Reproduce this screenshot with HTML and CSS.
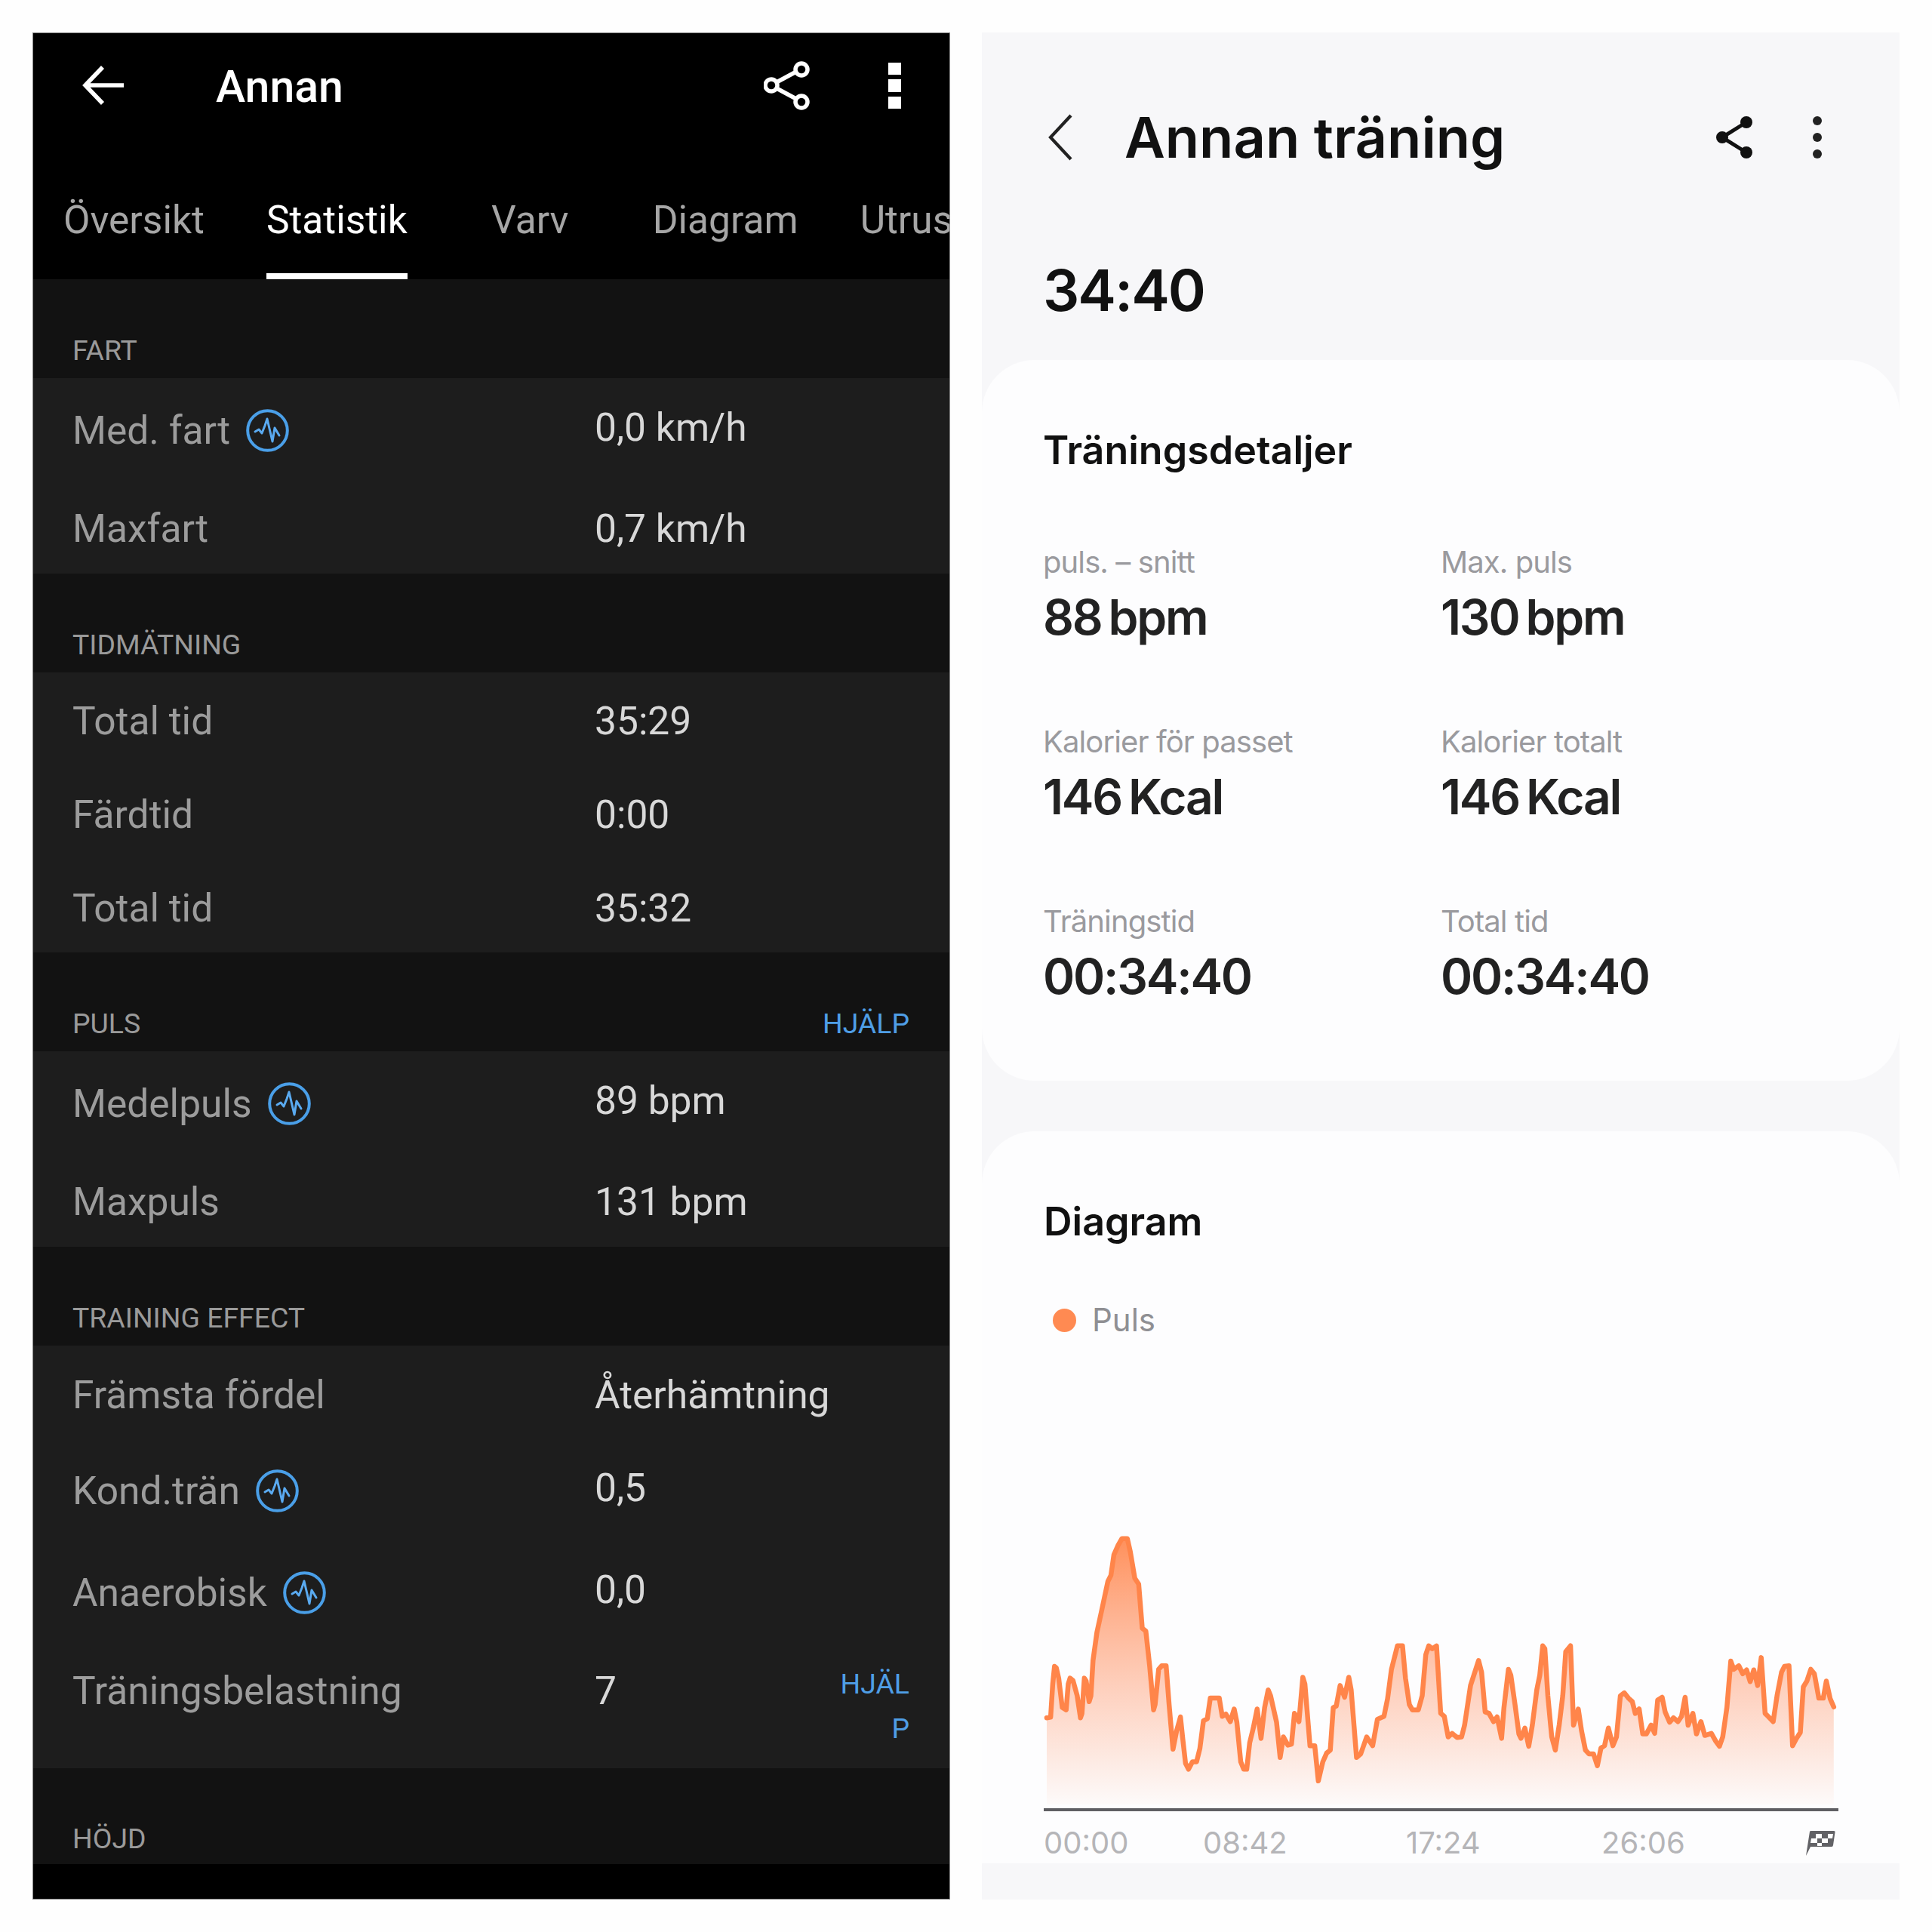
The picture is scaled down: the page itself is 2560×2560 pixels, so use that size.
FILE: index.html
```html
<!DOCTYPE html>
<html lang="sv">
<head>
<meta charset="utf-8">
<title>Annan</title>
<link rel="stylesheet" href="styles.css">
</head>
<body>
<svg class="defs" width="0" height="0" aria-hidden="true">
  <symbol id="pulse" viewBox="0 0 57 57">
    <circle cx="28.5" cy="28.5" r="26.300" fill="none" stroke="#4a9fe8" stroke-width="4"/>
    <path d="M12 30 L17 27 L21 32 L25 22 L28 13 L35 43 L38 25 L41 30 L44 35" fill="none" stroke="#5aaaf0" stroke-width="3" stroke-linejoin="round" stroke-linecap="round"/>
  </symbol>
</svg>
<main class="screens">
  <section class="garmin">
    <header class="g-bar">
      <svg class="g-back" viewBox="0 0 55 52"><path d="M27 2 L4 26 L27 50 M4 26 H55" fill="none" stroke="#fff" stroke-width="5.600"/></svg>
      <h1 class="g-title">Annan</h1>
      <svg class="g-share" viewBox="0 0 62 67"><g fill="none" stroke="#fff" stroke-width="5.500"><circle cx="50" cy="12" r="8"/><circle cx="10" cy="33" r="8"/><circle cx="50" cy="55" r="8"/><path d="M17 29 L43 15 M17 37 L43 51"/></g></svg>
      <svg class="g-dots" viewBox="0 0 17 61"><path d="M0 0h17v16H0zM0 22h17v17H0zM0 45h17v16H0z" fill="#fff"/></svg>
    </header>
    <nav class="g-tabs">
      <span class="tab">Översikt</span>
      <span class="tab active"><span class="tab-in">Statistik</span></span>
      <span class="tab">Varv</span>
      <span class="tab">Diagram</span>
      <span class="tab">Utrustning</span>
    </nav>

    <div class="sec-head"><span>FART</span></div>
    <div class="rows">
      <div class="row h-140 has-icon"><div class="lab">Med. fart<svg class="pulse"><use href="#pulse"/></svg></div><div class="val">0,0 km/h</div></div>
      <div class="row h-119 up"><div class="lab">Maxfart</div><div class="val">0,7 km/h</div></div>
    </div>

    <div class="sec-head"><span>TIDMÄTNING</span></div>
    <div class="rows pad-t">
      <div class="row h-124"><div class="lab">Total tid</div><div class="val">35:29</div></div>
      <div class="row h-124"><div class="lab">Färdtid</div><div class="val">0:00</div></div>
      <div class="row h-124"><div class="lab">Total tid</div><div class="val">35:32</div></div>
    </div>

    <div class="sec-head"><span>PULS</span><span class="help">HJÄLP</span></div>
    <div class="rows">
      <div class="row h-140 has-icon"><div class="lab">Medelpuls<svg class="pulse"><use href="#pulse"/></svg></div><div class="val">89 bpm</div></div>
      <div class="row h-119 up"><div class="lab">Maxpuls</div><div class="val">131 bpm</div></div>
    </div>

    <div class="sec-head"><span>TRAINING EFFECT</span></div>
    <div class="rows">
      <div class="row h-130"><div class="lab">Främsta fördel</div><div class="val">Återhämtning</div></div>
      <div class="row h-125 has-icon"><div class="lab">Kond.trän<svg class="pulse"><use href="#pulse"/></svg></div><div class="val">0,5</div></div>
      <div class="row h-146 has-icon"><div class="lab">Anaerobisk<svg class="pulse"><use href="#pulse"/></svg></div><div class="val">0,0</div></div>
      <div class="row h-159 top"><div class="lab">Träningsbelastning</div><div class="val">7</div><div class="help wrap">HJÄLP</div></div>
    </div>

    <div class="sec-head last"><span>HÖJD</span></div>
    <div class="g-end"></div>
  </section>

  <section class="samsung">
    <header class="s-bar">
      <svg class="s-back" viewBox="0 0 32 62"><path d="M30 2 L3 31 L30 60" fill="none" stroke="#222" stroke-width="4.200"/></svg>
      <h1 class="s-title">Annan träning</h1>
      <svg class="s-share" viewBox="0 0 48 56"><g fill="#111"><circle cx="40" cy="8" r="8"/><circle cx="8" cy="28" r="8"/><circle cx="40" cy="48" r="8"/></g><path d="M8 28 L40 8 M8 28 L40 48" stroke="#111" stroke-width="5" fill="none"/></svg>
      <svg class="s-dots" viewBox="0 0 12 56"><g fill="#222"><circle cx="6" cy="6" r="6"/><circle cx="6" cy="28" r="6"/><circle cx="6" cy="50" r="6"/></g></svg>
    </header>
    <div class="s-time">34:40</div>

    <div class="card details">
      <h2 class="card-title">Träningsdetaljer</h2>
      <div class="stats">
        <div class="stat"><div class="stat-lab">puls. – snitt</div><div class="stat-val">88<span class="unit">bpm</span></div></div>
        <div class="stat"><div class="stat-lab">Max. puls</div><div class="stat-val">130<span class="unit">bpm</span></div></div>
        <div class="stat"><div class="stat-lab">Kalorier för passet</div><div class="stat-val">146<span class="unit">Kcal</span></div></div>
        <div class="stat"><div class="stat-lab">Kalorier totalt</div><div class="stat-val">146<span class="unit">Kcal</span></div></div>
        <div class="stat"><div class="stat-lab">Träningstid</div><div class="stat-val">00:34:40</div></div>
        <div class="stat"><div class="stat-lab">Total tid</div><div class="stat-val">00:34:40</div></div>
      </div>
    </div>

    <div class="card chart-card">
      <h2 class="card-title">Diagram</h2>
      <div class="legend"><span class="legend-dot"></span>Puls</div>
      <svg class="chart" viewBox="120 200 2640 930" preserveAspectRatio="none">
        <defs>
          <linearGradient id="fade" gradientUnits="userSpaceOnUse" x1="0" y1="220" x2="0" y2="1130">
            <stop offset="0" stop-color="#ff8a52" stop-opacity=".95"/>
            <stop offset=".6" stop-color="#ff9a70" stop-opacity=".42"/>
            <stop offset="1" stop-color="#ff9a70" stop-opacity=".03"/>
          </linearGradient>
        </defs>
        <path class="area" d="M120 1130 L120 835 L133 833 L140 720 L146 660 L152 665 L160 700 L172 800 L185 808 L192 720 L198 700 L208 708 L222 760 L233 835 L238 820 L246 700 L252 710 L262 780 L268 760 L275 640 L288 545 L305 465 L325 370 L335 350 L345 280 L358 250 L372 225 L390 225 L400 270 L415 360 L428 380 L440 530 L452 540 L465 660 L478 808 L483 790 L495 670 L505 658 L520 658 L530 790 L543 942 L555 880 L568 832 L575 900 L585 990 L595 1010 L608 985 L622 985 L633 940 L645 845 L658 838 L668 768 L698 768 L708 830 L720 822 L735 848 L748 805 L757 850 L770 985 L780 1010 L790 1010 L800 920 L812 870 L825 805 L838 905 L850 800 L862 740 L870 760 L890 850 L902 970 L913 900 L928 928 L940 925 L950 820 L965 848 L978 697 L985 720 L1002 930 L1018 930 L1030 1050 L1045 985 L1058 955 L1070 945 L1080 800 L1090 795 L1103 725 L1118 765 L1132 697 L1140 740 L1158 970 L1172 958 L1192 900 L1212 930 L1228 840 L1250 830 L1262 770 L1275 670 L1295 590 L1312 590 L1322 700 L1335 790 L1345 808 L1365 808 L1378 760 L1390 620 L1400 590 L1412 600 L1426 590 L1440 820 L1452 830 L1465 900 L1478 888 L1495 902 L1510 900 L1520 860 L1540 725 L1567 640 L1577 680 L1589 815 L1602 820 L1617 848 L1629 832 L1644 905 L1652 800 L1667 670 L1675 690 L1689 790 L1702 890 L1709 905 L1722 870 L1735 932 L1747 860 L1762 740 L1772 690 L1782 590 L1789 600 L1799 760 L1812 900 L1824 945 L1837 860 L1849 760 L1859 610 L1875 590 L1885 860 L1901 805 L1912 880 L1925 945 L1937 958 L1952 958 L1965 998 L1977 938 L1989 930 L2002 870 L2017 930 L2029 900 L2042 760 L2055 750 L2069 768 L2082 780 L2092 820 L2105 805 L2117 890 L2129 890 L2145 860 L2157 888 L2167 775 L2182 765 L2192 815 L2207 850 L2220 835 L2235 848 L2247 830 L2259 765 L2269 860 L2285 820 L2297 890 L2312 848 L2325 895 L2347 888 L2362 915 L2374 932 L2385 900 L2399 800 L2412 642 L2422 670 L2439 658 L2452 685 L2465 672 L2477 712 L2489 672 L2502 725 L2514 630 L2527 820 L2537 830 L2554 848 L2567 760 L2582 680 L2592 660 L2607 658 L2619 930 L2632 905 L2645 885 L2655 730 L2667 710 L2680 670 L2692 685 L2707 768 L2722 768 L2732 710 L2745 770 L2757 798 L2757 1130 Z"/>
        <path class="line" d="M120 835 L133 833 L140 720 L146 660 L152 665 L160 700 L172 800 L185 808 L192 720 L198 700 L208 708 L222 760 L233 835 L238 820 L246 700 L252 710 L262 780 L268 760 L275 640 L288 545 L305 465 L325 370 L335 350 L345 280 L358 250 L372 225 L390 225 L400 270 L415 360 L428 380 L440 530 L452 540 L465 660 L478 808 L483 790 L495 670 L505 658 L520 658 L530 790 L543 942 L555 880 L568 832 L575 900 L585 990 L595 1010 L608 985 L622 985 L633 940 L645 845 L658 838 L668 768 L698 768 L708 830 L720 822 L735 848 L748 805 L757 850 L770 985 L780 1010 L790 1010 L800 920 L812 870 L825 805 L838 905 L850 800 L862 740 L870 760 L890 850 L902 970 L913 900 L928 928 L940 925 L950 820 L965 848 L978 697 L985 720 L1002 930 L1018 930 L1030 1050 L1045 985 L1058 955 L1070 945 L1080 800 L1090 795 L1103 725 L1118 765 L1132 697 L1140 740 L1158 970 L1172 958 L1192 900 L1212 930 L1228 840 L1250 830 L1262 770 L1275 670 L1295 590 L1312 590 L1322 700 L1335 790 L1345 808 L1365 808 L1378 760 L1390 620 L1400 590 L1412 600 L1426 590 L1440 820 L1452 830 L1465 900 L1478 888 L1495 902 L1510 900 L1520 860 L1540 725 L1567 640 L1577 680 L1589 815 L1602 820 L1617 848 L1629 832 L1644 905 L1652 800 L1667 670 L1675 690 L1689 790 L1702 890 L1709 905 L1722 870 L1735 932 L1747 860 L1762 740 L1772 690 L1782 590 L1789 600 L1799 760 L1812 900 L1824 945 L1837 860 L1849 760 L1859 610 L1875 590 L1885 860 L1901 805 L1912 880 L1925 945 L1937 958 L1952 958 L1965 998 L1977 938 L1989 930 L2002 870 L2017 930 L2029 900 L2042 760 L2055 750 L2069 768 L2082 780 L2092 820 L2105 805 L2117 890 L2129 890 L2145 860 L2157 888 L2167 775 L2182 765 L2192 815 L2207 850 L2220 835 L2235 848 L2247 830 L2259 765 L2269 860 L2285 820 L2297 890 L2312 848 L2325 895 L2347 888 L2362 915 L2374 932 L2385 900 L2399 800 L2412 642 L2422 670 L2439 658 L2452 685 L2465 672 L2477 712 L2489 672 L2502 725 L2514 630 L2527 820 L2537 830 L2554 848 L2567 760 L2582 680 L2592 660 L2607 658 L2619 930 L2632 905 L2645 885 L2655 730 L2667 710 L2680 670 L2692 685 L2707 768 L2722 768 L2732 710 L2745 770 L2757 798"/>
      </svg>
      <div class="axis"></div>
      <div class="ticks">
        <span>00:00</span><span>08:42</span><span>17:24</span><span>26:06</span>
        <svg class="flag" viewBox="0 0 40 34"><path d="M6 2 Q6 1 8 1 H38 Q40 1 39.500 3 L37 20 Q36.800 22 35 22 H7 L1 34 Z" fill="#626266"/><path d="M14 5h8v6h-8zM30 5h7l-1 6h-6zM8 11h8v6H7zM22 11h8v6h-8zM16 17h6v4h-6z" fill="#fff"/></svg>
      </div>
    </div>
  </section>
</main>
</body>
</html>
```
FILE: styles.css
```css
* { box-sizing: border-box; }
html, body { margin: 0; padding: 0; }
body { width: 2560px; height: 2560px; background: #fefefe; overflow: hidden; }
.defs { position: absolute; }
h1, h2 { margin: 0; }

.screens { display: flex; gap: 42px; padding: 43px; height: 2560px; }

/* Left phone */
.garmin {
  width: 1216px; height: 2474px; background: #000; overflow: hidden;
  font-family: Roboto, "Liberation Sans", sans-serif; color: #9c9c9c;
  outline: 1px solid #8a8a8a; outline-offset: -1px;
}
.g-bar { display: flex; align-items: center; height: 140px; padding: 0 65px 0 66px; }
.g-back { width: 55px; height: 52px; margin-right: 122px; flex: none; }
.g-title { font-size: 59px; font-weight: 500; line-height: 70px; padding-top: 4px; color: #fff; flex: 1; }
.g-share { width: 62px; height: 67px; margin-right: 103px; flex: none; }
.g-dots { width: 17px; height: 61px; flex: none; }

.g-tabs { display: flex; height: 187px; overflow: hidden; }
.tab {
  flex: none; min-width: 243px; height: 187px; padding: 74px 41px 0; text-align: center;
  font-size: 51.500px; line-height: 70px; color: #a6a6a6; white-space: nowrap;
}
.tab.active { color: #fff; padding-top: 0; }
.tab-in { display: block; height: 187px; padding-top: 74px; border-bottom: 8px solid #fff; }

.sec-head {
  display: flex; justify-content: space-between; align-items: flex-end;
  height: 131px; padding: 0 54px 16px 53px; background: #121212;
  font-size: 37.400px; line-height: 42px; color: #9a9a9a;
}
.sec-head.last { height: 127px; padding-bottom: 13px; }
.help { color: #4f9ee6; }
.g-end { height: 48px; background: #000; }

.rows { background: #1d1d1d; }
.rows.pad-t { height: 371px; padding-top: 2px; }
.row { display: flex; align-items: center; padding: 0 54px 0 53px; }
.h-140 { height: 140px; }
.h-119 { height: 119px; }
.h-124 { height: 124px; }
.h-130 { height: 130px; }
.h-125 { height: 125px; }
.h-146 { height: 146px; }
.h-159 { height: 159px; }
.lab { display: flex; align-items: center; gap: 21px; width: 692px; flex: none; font-size: 51.500px; color: #9c9c9c; }
.val { font-size: 51.500px; color: #d8d8d8; flex: 1; }
.has-icon .val { margin-bottom: 9px; }
.has-icon .lab { margin-bottom: 1px; }
.pulse { width: 57px; height: 57px; flex: none; }
.top { align-items: flex-start; padding-top: 18px; }
.top .lab, .top .val { line-height: 78px; }
.wrap {
  width: 100px; font-size: 37.400px; line-height: 59px; text-align: right; word-break: break-all; flex: none;
}

/* Right phone */
.samsung {
  width: 1216px; height: 2474px; background: #f7f7f9;
  font-family: Inter, "Noto Sans", sans-serif; color: #111;
}
.s-bar { display: flex; align-items: center; height: 278px; padding: 0 103px 0 88px; }
.s-back { width: 32px; height: 62px; margin-right: 69px; flex: none; }
.s-title { font-size: 74px; font-weight: 600; flex: 1; }
.s-share { width: 48px; height: 56px; margin-right: 80px; flex: none; }
.s-dots { width: 12px; height: 56px; flex: none; }
.s-time { height: 156px; padding-left: 81px; font-size: 76px; font-weight: 600; line-height: 126px; letter-spacing: -2px; }

.card { background: #fdfdfe; padding: 80px 81px 0 82px; border-radius: 70px 70px 0 0; }
.details { height: 955px; padding-left: 81px; border-radius: 70px; margin-bottom: 67px; }
.chart-card { height: 970px; }
.card-title { font-size: 52px; font-weight: 600; line-height: 80px; }

.stats { display: grid; grid-template-columns: 527px 1fr; row-gap: 100px; margin-top: 83px; }
.stat-lab { font-size: 40px; line-height: 50px; letter-spacing: -0.900px; color: #9a9a9e; }
.stat-val { font-size: 64px; font-weight: 600; line-height: 80px; margin-top: 8px; letter-spacing: -2.200px; color: #222; }
.unit { margin-left: 9px; }

.legend { display: flex; align-items: center; margin-top: 65px; font-size: 42px; line-height: 50px; color: #8f8f93; padding-left: 12px; }
.legend-dot { width: 31px; height: 31px; border-radius: 50%; background: #ff8a52; margin-right: 21px; }
.chart { display: block; width: 1044px; height: 362px; margin: 255px 0 0 4px; overflow: visible; }
.area { fill: url(#fade); }
.line { fill: none; stroke: #ff854a; stroke-width: 6.500px; stroke-linejoin: round; stroke-linecap: round; vector-effect: non-scaling-stroke; }
.axis { height: 4px; margin-top: 5px; background: #5e5e62; }
.ticks { display: grid; grid-template-columns: 211px 269px 259px 1fr auto; align-items: center; margin-top: 17px; font-size: 40px; line-height: 50px; color: #b5b5b8; }
.flag { width: 40px; height: 34px; margin-right: 4px; }
```
